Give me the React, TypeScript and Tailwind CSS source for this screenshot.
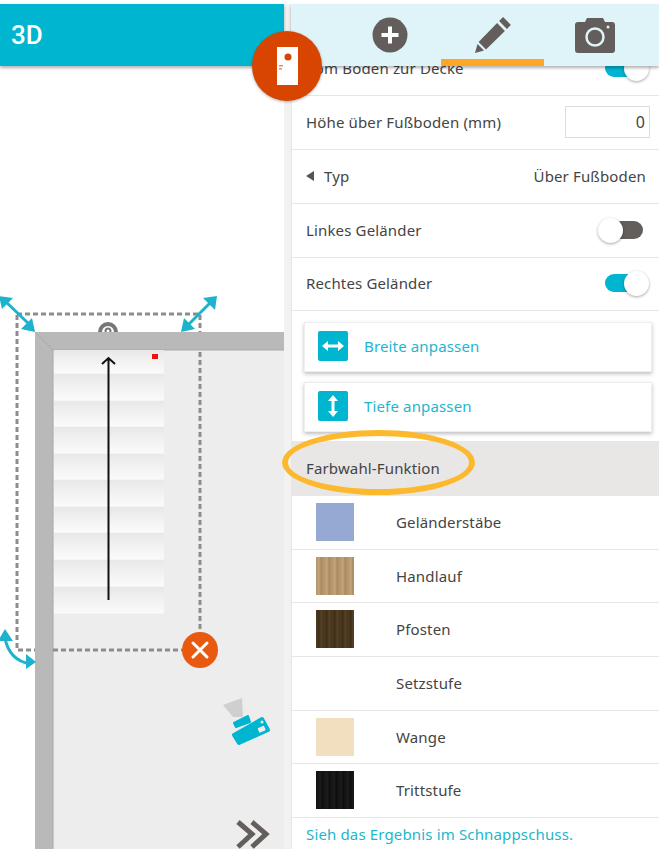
import type { ReactNode } from 'react';

const swatches = [
  { name: 'Geländerstäbe', color: 'bg-[#95a9d3]' },
  { name: 'Handlauf', color: 'bg-[repeating-linear-gradient(90deg,#b4956b_0px,#c2a57c_3px,#a98a60_5px,#b99a70_8px)]' },
  { name: 'Pfosten', color: 'bg-[repeating-linear-gradient(90deg,#4d3a20_0px,#3f2e18_3px,#55412a_5px,#463419_8px)]' },
  { name: 'Setzstufe', color: '' },
  { name: 'Wange', color: 'bg-[#f2dfbf]' },
  { name: 'Trittstufe', color: 'bg-[repeating-linear-gradient(90deg,#111_0px,#1c1c1c_4px,#0b0b0b_7px)]' },
];

function Row({ children, short }: { children: ReactNode; short?: boolean }) {
  return (
    <div className={`flex shrink-0 items-center justify-between border-b border-[#e6e6e6] pb-[1px] pl-[14px] pr-[10px] ${short ? 'h-[53px]' : 'h-[54px]'}`}>
      {children}
    </div>
  );
}

function Toggle({ on }: { on: boolean }) {
  if (on) {
    return (
      <div className="relative h-[25px] w-[44px]">
        <div className="absolute left-0 top-[3px] h-[18px] w-[35px] rounded-full bg-[#00b5cf]" />
        <div className="absolute right-0 top-0 h-[25px] w-[25px] rounded-full bg-white shadow-[0_1px_3px_rgba(0,0,0,0.35)]" />
      </div>
    );
  }
  return (
    <div className="relative mr-[6px] h-[25px] w-[45px]">
      <div className="absolute right-0 top-[3px] h-[18px] w-[31px] rounded-full bg-[#635e5b]" />
      <div className="absolute left-0 top-0 h-[25px] w-[25px] rounded-full bg-white shadow-[0_1px_3px_rgba(0,0,0,0.35)]" />
    </div>
  );
}

function ActionCard({ label, vertical }: { label: string; vertical?: boolean }) {
  return (
    <div className="flex h-[50px] items-center gap-[16px] border border-[#eeeeee] bg-white pb-[2px] pl-[13px] shadow-[0_2px_4px_rgba(0,0,0,0.25)]">
      <div className="flex h-[30px] w-[30px] items-center justify-center rounded-[2px] bg-[#00b5cf]">
        <svg width="24" height="24" viewBox="0 0 24 24" className={vertical ? 'rotate-90' : ''}>
          <path d="M1 12 L7 7 V10.5 H17 V7 L23 12 L17 17 V13.5 H7 V17 Z" fill="#fff" />
        </svg>
      </div>
      <span className="text-[#1db6ce]">{label}</span>
    </div>
  );
}

function PlanDrawing() {
  const steps = [350, 374, 401, 427, 454, 480, 507, 533, 560, 587];
  return (
    <svg width="284" height="783" viewBox="0 66 284 783" className="block">
      <defs>
        <linearGradient id="step" x1="0" y1="0" x2="0" y2="1">
          <stop offset="0" stopColor="#e8e8e8" />
          <stop offset="0.55" stopColor="#f3f3f3" />
          <stop offset="0.95" stopColor="#fafafa" />
          <stop offset="1" stopColor="#f2f2f2" />
        </linearGradient>
      </defs>
      <rect x="17" y="314" width="183" height="336" fill="none" stroke="#8d8d8d" strokeWidth="3" strokeDasharray="5 3" />
      <path d="M100 332 a 8 8 0 0 1 16 0" fill="none" stroke="#777" strokeWidth="4" />
      <circle cx="108" cy="331" r="2.5" fill="none" stroke="#777" strokeWidth="2" />
      <rect x="53" y="350" width="231" height="499" fill="#ededed" />
      <polygon points="35,332 284,332 284,350 53,350 53,849 35,849" fill="#b9b9b9" />
      <path d="M35 332 L53 350 H284 M53 350 V849" fill="none" stroke="#a9a9a9" strokeWidth="1" />
      {steps.map((y, i) => (
        <rect key={y} x="54" y={y} width="110" height={(steps[i + 1] ?? 614) - y} fill="url(#step)" />
      ))}
      <rect x="152" y="354" width="6" height="5" fill="#ee1111" />
      <path d="M108.5 600 V358 M102 364 L108.5 358 L115 364" fill="none" stroke="#111" strokeWidth="2" />
      <path d="M200 352 V632" stroke="#8d8d8d" strokeWidth="3" strokeDasharray="5 3" />
      <path d="M53 650 H184" stroke="#8d8d8d" strokeWidth="3" strokeDasharray="5 3" />
      {/* resize arrows */}
      <g fill="#1db3cd" stroke="none">
        <path d="M5 301 L30 325" stroke="#1db3cd" strokeWidth="3" />
        <polygon points="-1,296 13,298 2,309" />
        <polygon points="35,332 21,329 32,318" />
        <path d="M188 325 L211 302" stroke="#1db3cd" strokeWidth="3" />
        <polygon points="217,296 215,310 203,298" />
        <polygon points="181,332 184,318 195,329" />
        <path d="M5 638 Q9 660 30 664" fill="none" stroke="#1db3cd" strokeWidth="3" />
        <polygon points="5,629 13,641 -2,641" />
        <polygon points="36,662 26,669 26,654" />
      </g>
      <circle cx="200" cy="650" r="18" fill="#e85a0f" />
      <path d="M193 643 L207 657 M207 643 L193 657" stroke="#fff" strokeWidth="3" strokeLinecap="round" />
      {/* spot tool */}
      <polygon points="223,705 242,698 243,717 233,717" fill="#cfcfcf" />
      <polygon points="234,723 248,716 250,722 236,727" fill="#00b5cf" stroke="#00b5cf" strokeWidth="2" strokeLinejoin="round" />
      <polygon points="234,735 262,719 268,730 239,743" fill="#00b5cf" stroke="#00b5cf" strokeWidth="4" strokeLinejoin="round" />
      <circle cx="262" cy="722" r="1.5" fill="#ededed" />
      <rect x="258" y="727" width="7" height="5" rx="1" fill="#ededed" transform="rotate(-24 261 729)" />
      {/* collapse */}
      <path d="M238 822 L252 834 L238 847 M252 822 L266 834 L252 847" fill="none" stroke="#635e5b" strokeWidth="5" />
    </svg>
  );
}

export default function App() {
  return (
    <div className="flex h-[849px] w-[659px] overflow-hidden bg-white pt-[4px] font-['Noto_Sans',sans-serif] text-[15px] tracking-[0.15px] text-[#444]">
      <div className="relative z-10 flex w-[284px] shrink-0 flex-col">
        <div className="flex h-[62px] shrink-0 items-center bg-[#00b5cf] pl-[11px] shadow-[0_2px_3px_rgba(0,0,0,0.3)]">
          <span className="font-['Roboto',sans-serif] text-[26px] font-medium tracking-normal text-white">3D</span>
        </div>
        <PlanDrawing />
      </div>

      <div className="w-[7px] shrink-0 bg-[#f2f2f2]" />

      <div className="relative flex min-w-0 flex-1 flex-col">
        <div className="relative z-10 flex h-[62px] shrink-0 bg-[#dff4f8] pl-[48px] pr-[13px] shadow-[0_2px_3px_rgba(0,0,0,0.3)]">
          <div className="flex w-[102px] items-center justify-center">
            <svg width="36" height="36" viewBox="0 0 36 36">
              <circle cx="18" cy="18" r="17.5" fill="#635e5b" />
              <path d="M18 9.5 V26.5 M9.5 18 H26.5" stroke="#fff" strokeWidth="4" />
            </svg>
          </div>
          <div className="relative flex w-[103px] items-center justify-center">
            <svg width="36" height="36" viewBox="0 0 36 36">
              <polygon points="0,36 2.5,27 9,33.5" fill="#635e5b" />
              <polygon points="3.6,25 22.1,6.1 29.9,13.9 11,32.4" fill="#635e5b" />
              <polygon points="24.1,4.1 28.1,0.1 35.9,7.9 31.9,11.9" fill="#635e5b" />
            </svg>
            <div className="absolute inset-x-0 bottom-0 h-[7px] bg-[#fea726]" />
          </div>
          <div className="flex w-[102px] items-center justify-center">
            <svg width="40" height="36" viewBox="0 0 40 36">
              <path d="M3 5 H10 L12 1 H28 L30 5 H37 Q40 5 40 8 V33 Q40 36 37 36 H3 Q0 36 0 33 V8 Q0 5 3 5 Z" fill="#635e5b" />
              <circle cx="20" cy="20" r="8.5" fill="none" stroke="#dff4f8" strokeWidth="2.5" />
              <circle cx="33" cy="10" r="1.5" fill="#dff4f8" />
            </svg>
          </div>
        </div>

        <div className="mt-[-24px] flex min-h-0 flex-1 flex-col border-l border-[#e6e6e6]">
          <Row>
            <span>Vom Boden zur Decke</span>
            <Toggle on />
          </Row>
          <Row>
            <span>Höhe über Fußboden (mm)</span>
            <div className="mr-[-1px] flex h-[32px] w-[85px] items-center justify-end border border-[#dddddd] pr-[4px] text-[16px]">0</div>
          </Row>
          <Row>
            <span className="flex items-center gap-[10px]">
              <span className="h-0 w-0 border-y-[5.5px] border-r-[8px] border-y-transparent border-r-[#555]" />
              Typ
            </span>
            <span className="pr-[3px]">Über Fußboden</span>
          </Row>
          <Row>
            <span>Linkes Geländer</span>
            <Toggle on={false} />
          </Row>
          <Row short>
            <span>Rechtes Geländer</span>
            <Toggle on />
          </Row>
          <div className="flex shrink-0 flex-col gap-[10px] pb-[9px] pl-[12px] pr-[7px] pt-[11px]">
            <ActionCard label="Breite anpassen" />
            <ActionCard label="Tiefe anpassen" vertical />
          </div>
          <div className="relative flex h-[55px] shrink-0 items-center bg-[#e8e7e6] pl-[14px]">
            <span>Farbwahl-Funktion</span>
            <div className="absolute left-[-10px] top-[-11px] z-20 h-[65px] w-[193px] rounded-[50%] border-[6px] border-[#fdb92e]" />
          </div>
          {swatches.map((s) => (
            <div key={s.name} className="flex h-[53.7px] shrink-0 items-start border-b border-[#e6e6e6] pl-[24px]">
              <div className={`mt-[7px] h-[38px] w-[38px] shrink-0 ${s.color}`} />
              <span className="ml-[42px] mt-[15px]">{s.name}</span>
            </div>
          ))}
          <div className="pl-[14px] pt-[5px] text-[#1db6ce]">Sieh das Ergebnis im Schnappschuss.</div>
        </div>
      </div>

      <div className="absolute left-[252px] top-[31px] z-20 flex h-[70px] w-[70px] items-center justify-center rounded-full bg-[#d84500] shadow-[0_1px_3px_rgba(0,0,0,0.3)]">
        <svg width="21" height="38" viewBox="0 0 21 38">
          <rect width="21" height="38" fill="#fff" />
          <circle cx="11" cy="10" r="3.5" fill="#d84500" />
          <rect x="2" y="18" width="4" height="1.5" fill="#e88a5c" />
          <rect x="2" y="21" width="3" height="1.5" fill="#e88a5c" />
        </svg>
      </div>
    </div>
  );
}
